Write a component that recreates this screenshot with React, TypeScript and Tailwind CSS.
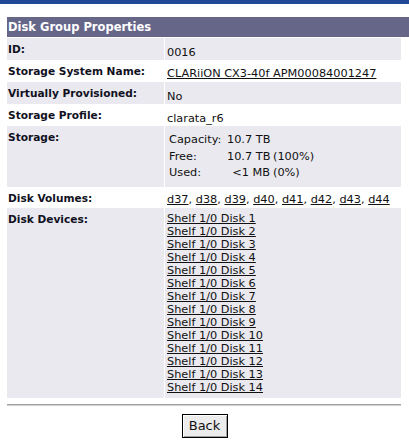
import React from 'react';

const font = { fontFamily: '"DejaVu Sans", Verdana, sans-serif' };

const Row: React.FC<{ label: string; shade: boolean; className?: string; children: React.ReactNode }> = ({
  label,
  shade,
  className = '',
  children,
}) => (
  <div className={`flex ${className}`}>
    <div className={`w-[157px] shrink-0 pl-[1px] pt-[5px] text-[10.6px] font-bold leading-[13px] text-[#111122] whitespace-nowrap ${shade ? 'bg-[#e9e9ef]' : 'bg-white'}`}>
      {label}
    </div>
    <div className="w-[1px] shrink-0 bg-white" />
    <div className={`flex-1 pl-[2px] text-[11.3px] leading-[13px] text-[#111] whitespace-nowrap ${shade ? 'bg-[#e9e9ef]' : 'bg-white'}`}>
      {children}
    </div>
  </div>
);

const volumes = ['d37', 'd38', 'd39', 'd40', 'd41', 'd42', 'd43', 'd44'];
const disks = Array.from({ length: 14 }, (_, i) => `Shelf 1/0 Disk ${i + 1}`);

export default function App() {
  return (
    <div className="w-[409px] h-[448px] bg-white overflow-hidden" style={font}>
      <div className="h-[4px] bg-[#1f4896]" />

      <div className="ml-[7px] mt-[13px] h-[20px] bg-[#666689] pl-[1px] text-[11.5px] font-bold leading-[20px] text-white">
        Disk Group Properties
      </div>

      <div className="ml-[7px] mt-[1px] w-[394px]">
        <Row label="ID:" shade className="h-[22px]">
          <div className="pt-[8px]">0016</div>
        </Row>
        <Row label="Storage System Name:" shade={false} className="h-[22px]">
          <div className="pt-[7px]">
            <a href="#" className="underline text-[#111]">CLARiiON CX3-40f APM00084001247</a>
          </div>
        </Row>
        <Row label="Virtually Provisioned:" shade className="h-[22px]">
          <div className="pt-[8px]">No</div>
        </Row>
        <Row label="Storage Profile:" shade={false} className="h-[22px]">
          <div className="pt-[8px]">clarata_r6</div>
        </Row>
        <Row label="Storage:" shade className="h-[61px]">
          <div className="grid grid-cols-[58px_43px_auto] pt-[6px] pl-[2px] leading-[16.5px]">
            <span>Capacity:</span>
            <span>10.7 TB</span>
            <span />
            <span>Free:</span>
            <span className="text-right">10.7 TB</span>
            <span className="pl-[3px]">(100%)</span>
            <span>Used:</span>
            <span className="text-right">&lt;1 MB</span>
            <span className="pl-[3px]">(0%)</span>
          </div>
        </Row>
        <Row label="Disk Volumes:" shade={false} className="h-[21px]">
          <div className="pt-[6px]">
            {volumes.map((v, i) => (
              <React.Fragment key={v}>
                <a href="#" className="underline text-[#111]">{v}</a>
                {i < volumes.length - 1 ? ', ' : ''}
              </React.Fragment>
            ))}
          </div>
        </Row>
        <Row label="Disk Devices:" shade className="h-[190px]">
          <div className="flex flex-col items-start pt-[4px]">
            {disks.map(d => (
              <a key={d} href="#" className="underline text-[#111] leading-[13px]">{d}</a>
            ))}
          </div>
        </Row>
      </div>

      <div className="ml-[7px] mt-[6px] w-[394px] border-t border-b border-t-[#a0a0a0] border-b-[#d0d0d0]" />

      <div className="flex justify-center mt-[8px]">
        <button className="h-[24px] w-[46px] border border-black bg-[#ececec] text-[13px] text-[#111] shadow-[inset_1px_1px_0_#fff,inset_-1px_-1px_0_#a0a0a0]">
          Back
        </button>
      </div>
    </div>
  );
}
